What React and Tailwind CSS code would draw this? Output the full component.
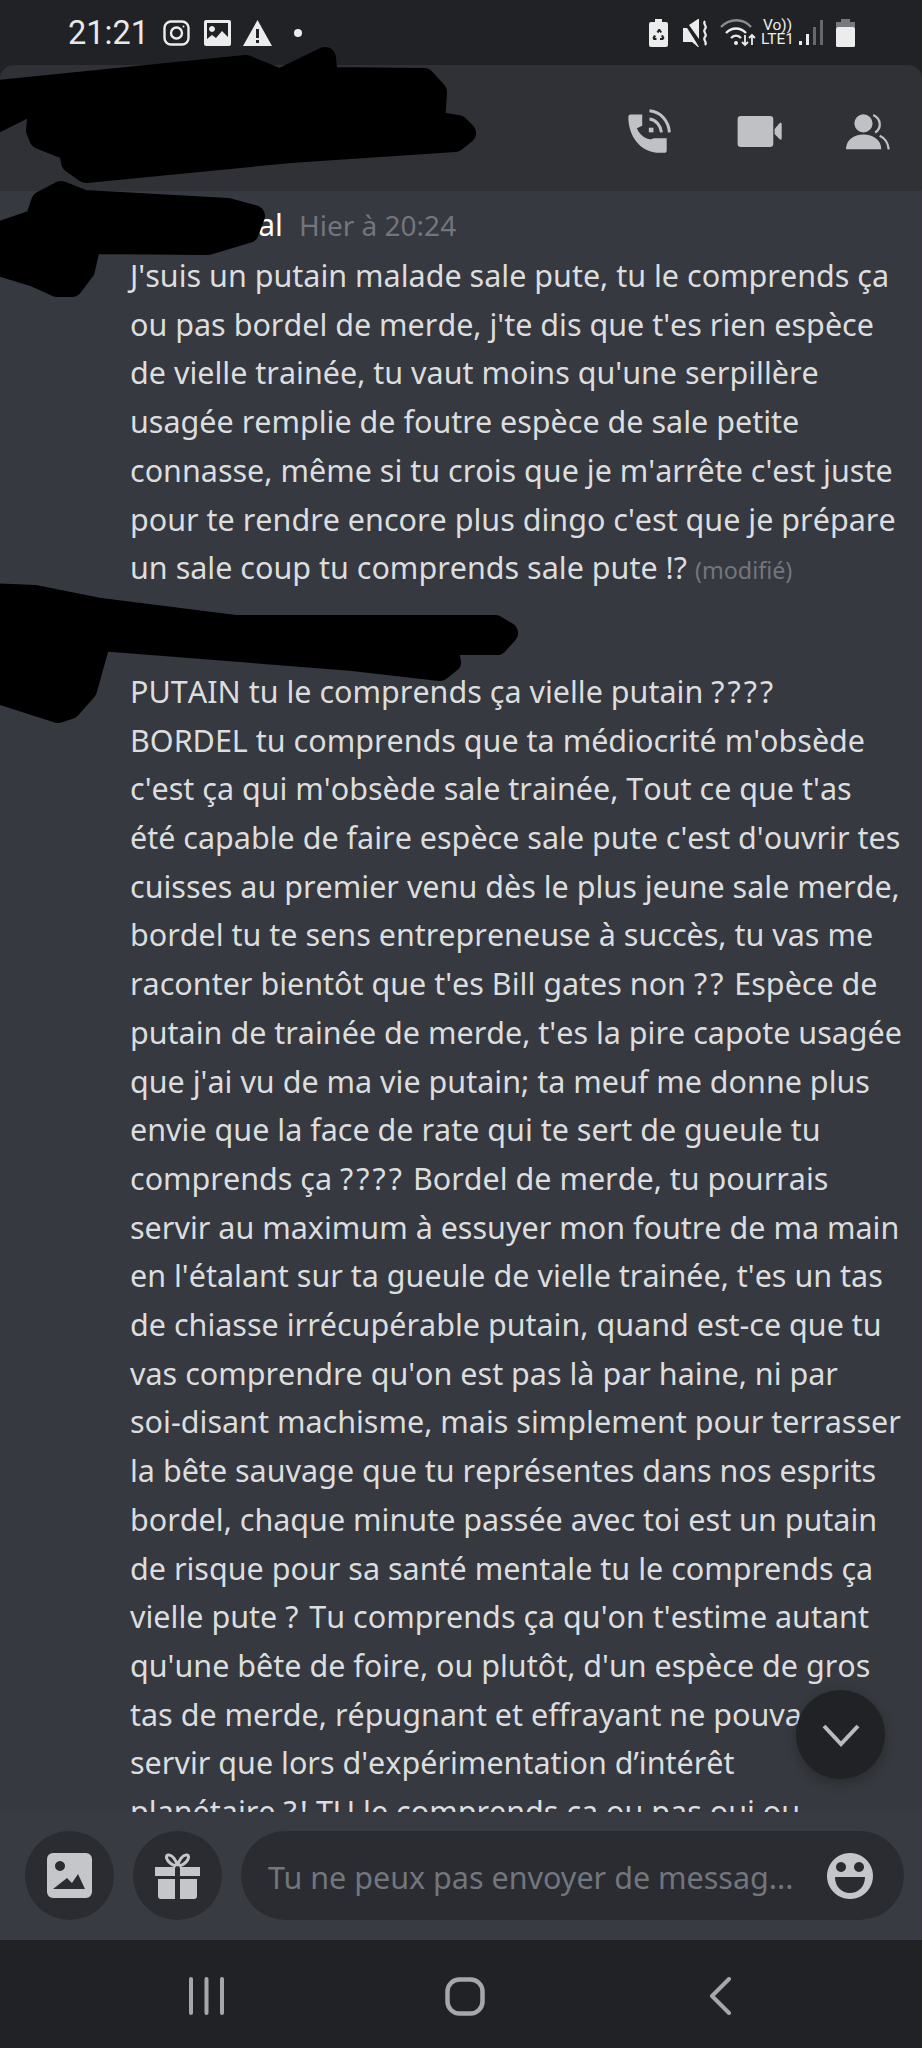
import React from "react";

const firstLines = [
  "J'suis un putain malade sale pute, tu le comprends ça",
  "ou pas bordel de merde, j'te dis que t'es rien espèce",
  "de vielle trainée, tu vaut moins qu'une serpillère",
  "usagée remplie de foutre espèce de sale petite",
  "connasse, même si tu crois que je m'arrête c'est juste",
  "pour te rendre encore plus dingo c'est que je prépare",
];

const secondLines = [
  "PUTAIN tu le comprends ça vielle putain ????",
  "BORDEL tu comprends que ta médiocrité m'obsède",
  "c'est ça qui m'obsède sale trainée, Tout ce que t'as",
  "été capable de faire espèce sale pute c'est d'ouvrir tes",
  "cuisses au premier venu dès le plus jeune sale merde,",
  "bordel tu te sens entrepreneuse à succès, tu vas me",
  "raconter bientôt que t'es Bill gates non ?? Espèce de",
  "putain de trainée de merde, t'es la pire capote usagée",
  "que j'ai vu de ma vie putain; ta meuf me donne plus",
  "envie que la face de rate qui te sert de gueule tu",
  "comprends ça ???? Bordel de merde, tu pourrais",
  "servir au maximum à essuyer mon foutre de ma main",
  "en l'étalant sur ta gueule de vielle trainée, t'es un tas",
  "de chiasse irrécupérable putain, quand est-ce que tu",
  "vas comprendre qu'on est pas là par haine, ni par",
  "soi-disant machisme, mais simplement pour terrasser",
  "la bête sauvage que tu représentes dans nos esprits",
  "bordel, chaque minute passée avec toi est un putain",
  "de risque pour sa santé mentale tu le comprends ça",
  "vielle pute ? Tu comprends ça qu'on t'estime autant",
  "qu'une bête de foire, ou plutôt, d'un espèce de gros",
  "tas de merde, répugnant et effrayant ne pouvant",
  "servir que lors d'expérimentation d’intérêt",
  "planétaire ?! TU le comprends ça ou pas oui ou",
];

// les ? sont plus larges dans la capture
const Line = ({ text }) => (
  <div>
    {text.split(/(\?+)/).map((part, i) =>
      part.startsWith("?") ? (
        <span key={i} className="tracking-[3px]">{part}</span>
      ) : (
        part
      )
    )}
  </div>
);

const Status = () => (
  <div className="h-[65px] shrink-0 flex items-center justify-between pl-[68px] pr-[67px] pt-[1px]">
    <div className="flex items-center">
      <span className="text-[32.5px] leading-none text-[#e8e8e8] font-['Roboto',sans-serif] w-[95px]">21:21</span>
      <svg width="27" height="26" viewBox="0 0 27 26" fill="none" stroke="#ececec" strokeWidth="2.4">
        <rect x="1.5" y="1.5" width="24" height="23" rx="6.5" />
        <circle cx="13.5" cy="13" r="5.5" />
        <circle cx="20.5" cy="6.5" r="1" fill="#ececec" stroke="none" />
      </svg>
      <svg className="ml-[14px]" width="27" height="26" viewBox="0 0 27 26">
        <path fillRule="evenodd" fill="#ececec" d="M2 0h23a2 2 0 0 1 2 2v22a2 2 0 0 1-2 2H2a2 2 0 0 1-2-2V2a2 2 0 0 1 2-2zM3 3v16l5-4 4 3 6-7 6 6V3zM8 6a3 3 0 1 0 .01 0z" />
      </svg>
      <svg className="ml-[12px]" width="29" height="26" viewBox="0 0 29 26">
        <path fillRule="evenodd" fill="#ececec" d="M14.5 0 29 26H0zM13 9v9h3V9zM13 20v3h3v-3z" />
      </svg>
      <span className="ml-[22px] w-[8px] h-[8px] rounded-full bg-[#ececec]" />
    </div>
    <div className="flex items-center">
      <svg width="19" height="28" viewBox="0 0 19 28">
        <path fillRule="evenodd" fill="#ececec" d="M6 0h7v3h4a2 2 0 0 1 2 2v21a2 2 0 0 1-2 2H2a2 2 0 0 1-2-2V5a2 2 0 0 1 2-2h4zM9.500 10l-2 3 2 1 1-1.500 1 1.500 1.500-1-2-3zM5 16l-1.500 3 1 2h3v-2H6l1-2zM14 16l-2 .8 1 2.200h-2v2h3l1.500-2z" />
      </svg>
      <svg className="ml-[14px]" width="27" height="28" viewBox="0 0 27 28">
        <path fill="#ececec" d="M1 9h5l11 19-1 0-6-5H1zM7 6l9-6h1v20z" />
        <path d="M1 1 18 27" stroke="#202225" strokeWidth="2" />
        <path d="M23 2c-3 3 3 5 0 8s3 5 0 8 3 5 0 8" fill="none" stroke="#ececec" strokeWidth="2.2" />
      </svg>
      <svg className="ml-[11px]" width="36" height="28" viewBox="0 0 36 28" fill="none">
        <path d="M1 8c9-9 22-9 30 0" stroke="#8a8b8d" strokeWidth="2.4" />
        <path d="M6 14c6-6 14-6 20 0" stroke="#ececec" strokeWidth="2.4" />
        <path d="M11 19c3-3 7-3 10 0" stroke="#ececec" strokeWidth="2.4" />
        <circle cx="16" cy="24" r="2" fill="#ececec" />
        <path d="M25 16v10M22 23l3 3 3-3M32 26V16M29 19l3-3 3 3" stroke="#ececec" strokeWidth="1.8" />
      </svg>
      <div className="ml-[5px] w-[33px] flex flex-col items-center font-['Roboto',sans-serif] text-[#ececec] text-[15.5px] leading-[14px] mt-[-3px] whitespace-nowrap">
        <span>Vo))</span>
        <span>LTE1</span>
      </div>
      <svg className="ml-[5px]" width="25" height="28" viewBox="0 0 25 28">
        <rect x="0" y="22" width="3" height="4" fill="#ececec" />
        <rect x="7" y="15" width="3" height="11" fill="#ececec" />
        <rect x="14" y="8" width="3" height="18" fill="#66686b" />
        <rect x="21" y="1" width="3" height="25" fill="#66686b" />
      </svg>
      <svg className="ml-[12px]" width="19" height="28" viewBox="0 0 19 28">
        <rect x="5" y="0" width="9" height="4" fill="#77797c" />
        <rect x="0" y="3" width="19" height="5" fill="#77797c" />
        <rect x="0" y="8" width="19" height="20" rx="1.500" fill="#ececec" />
      </svg>
    </div>
  </div>
);

const Header = () => (
  <div className="h-[126px] shrink-0 bg-[#2f3136] rounded-t-[14px] flex items-center justify-end pr-[31px] pt-[6px]">
    <svg width="45" height="46" viewBox="80 45 136 138" fill="none">
      <path fill="#c0c1c4" d="M90 64H126V98L110 106C116 122 130 136 150 140L162 136H200V172Q200 180 192 180H170C120 176 84 130 84 72Q84 64 90 64Z" />
      <path d="M148 53C182 56 206 84 208 118M148 78C168 80 182 98 184 118" stroke="#c0c1c4" strokeWidth="9" />
      <path fill="#c0c1c4" d="M146 104H160V118H146Z" />
    </svg>
    <svg className="ml-[64px]" width="47" height="33" viewBox="405 60 145 100">
      <path fill="#c0c1c4" d="M420 62H510A10 10 0 0 1 520 72V148A10 10 0 0 1 510 158H420A10 10 0 0 1 410 148V72A10 10 0 0 1 420 62ZM524 102 540 84Q546 80 546 88V130Q546 138 540 134L524 118Z" />
    </svg>
    <svg className="ml-[61px]" width="47" height="39" viewBox="730 50 145 118" fill="none">
      <circle cx="790" cy="84" r="28" fill="#c0c1c4" />
      <path fill="#c0c1c4" d="M736 164C736 135 760 118 790 118C820 118 845 135 845 164Z" />
      <path d="M820 58C846 70 846 100 826 112M840 122C858 130 866 145 868 164" stroke="#c0c1c4" strokeWidth="7" />
    </svg>
  </div>
);

const Messages = () => (
  <div className="flex-1 min-h-0 overflow-hidden bg-[#36393f] pt-[9px] font-['Noto_Sans',sans-serif] [font-kerning:none] text-[30.5px] leading-[48.7px] text-[#dcddde]">
    <div className="flex items-baseline pl-[258px] h-[51px]">
      <span className="text-[#ffffff]">al</span>
      <span className="ml-[16px] text-[28px] text-[#72767d]">Hier à 20:24</span>
    </div>
    <div className="pl-[130px] whitespace-nowrap">
      {firstLines.map((line) => (
        <Line key={line} text={line} />
      ))}
      <div>
        un sale coup tu comprends sale pute !?{" "}
        <span className="text-[23.3px] text-[#72767d]">(modifié)</span>
      </div>
      <div className="mt-[72px]">
        {secondLines.map((line) => (
          <Line key={line} text={line} />
        ))}
      </div>
    </div>
  </div>
);

const Circle = ({ children }) => (
  <div className="w-[89px] h-[89px] shrink-0 rounded-full bg-[#2a2c31] flex items-center justify-center">
    {children}
  </div>
);

const InputBar = () => (
  <div className="h-[128px] shrink-0 bg-[#383b42] flex items-center pl-[25px] pr-[18px] pb-[1px] gap-[19px]">
    <Circle>
      <svg width="45" height="45" viewBox="0 0 45 45">
        <path fillRule="evenodd" fill="#c4c6ca" d="M6 0h33a6 6 0 0 1 6 6v33a6 6 0 0 1-6 6H6a6 6 0 0 1-6-6V6a6 6 0 0 1 6-6zM13 8a5 5 0 1 0 .01 0zM6 36h32l-7-15-6 9-5-5z" />
      </svg>
    </Circle>
    <Circle>
      <svg width="45" height="46" viewBox="0 0 45 46">
        <path fill="none" stroke="#c4c6ca" strokeWidth="3" d="M21 13 C13 11 9 3 13 2 C17 1 21 7 22.500 13 C24 7 28 1 32 2 C36 3 32 11 24 13" />
        <path fill="#c4c6ca" d="M0 14h20v9H0zM25 14h20v9H25zM3 26h17v20H6a3 3 0 0 1-3-3zM25 26h17v17a3 3 0 0 1-3 3H25z" />
      </svg>
    </Circle>
    <div className="flex-1 h-[89px] rounded-full bg-[#2a2c31] flex items-center justify-between pl-[27px] pr-[31px] font-['Noto_Sans',sans-serif]">
      <span className="text-[30.5px] text-[#72767d] whitespace-nowrap pt-[5px]">Tu ne peux pas envoyer de messag...</span>
      <svg width="46" height="46" viewBox="0 0 46 46">
        <path fillRule="evenodd" fill="#c4c6ca" d="M23 0a23 23 0 1 1-.01 0zM14 9a5 5 0 1 0 .01 0zM32 9a5 5 0 1 0 .01 0zM8 24c0 10 7 16 15 16s15-6 15-16z" />
      </svg>
    </div>
  </div>
);

const NavBar = () => (
  <div className="h-[108px] shrink-0 bg-[#202225] flex items-center pt-[4px]">
    <svg className="ml-[189px]" width="35" height="38" viewBox="0 0 35 38" fill="#a6a7a9">
      <rect x="0" y="0" width="4" height="38" rx="2" />
      <rect x="15.500" y="0" width="4" height="38" rx="2" />
      <rect x="31" y="0" width="4" height="38" rx="2" />
    </svg>
    <svg className="ml-[221px]" width="40" height="39" viewBox="0 0 40 39" fill="none">
      <rect x="2.500" y="2.500" width="35" height="34" rx="12" stroke="#a6a7a9" strokeWidth="4.500" />
    </svg>
    <svg className="ml-[224px]" width="23" height="38" viewBox="0 0 23 38" fill="none">
      <path d="M20 2 3 19l17 17" stroke="#a6a7a9" strokeWidth="4" strokeLinecap="round" strokeLinejoin="round" />
    </svg>
  </div>
);

const App = () => {
  return (
    <div className="relative w-[922px] h-[2048px] overflow-hidden bg-[#202225] flex flex-col">
      <Status />
      <Header />
      <Messages />
      <InputBar />
      <NavBar />

      {/* bouton retour en bas */}
      <div className="absolute left-[796px] top-[1690px] w-[89px] h-[89px] rounded-full bg-[#202225] shadow-[0_4px_12px_rgba(0,0,0,0.25)] flex items-center justify-center">
        <svg width="40" height="24" viewBox="0 0 40 24" fill="none">
          <path d="M3 3l17 18L37 3" stroke="#b9bbbe" strokeWidth="4" />
        </svg>
      </div>

      {/* zones noircies */}
      <svg className="absolute left-0 top-0 pointer-events-none" width="922" height="2048" viewBox="0 0 922 2048" fill="#000" stroke="#000" strokeWidth="22" strokeLinejoin="round">
        <path d="M-12 92 246 66 280 80 325 58 327 78 424 79 436 92 434 122 458 126 465 133 455 141 290 152 86 172 72 162 70 150 40 138 37 130 40 100-12 126z" />
        <path d="M61 192 84 201 228 209 254 216 248 232 208 244 90 243 84 270 72 286 57 286 35 276-11 262-11 236 36 220 42 202z" />
        <path d="M-11 594 35 596 100 609 235 626 495 626 507 633 497 644 446 644 450 662 440 670 353 660 100 640 86 690 70 708 58 712-11 690z" />
      </svg>
    </div>
  );
};

export default App;
